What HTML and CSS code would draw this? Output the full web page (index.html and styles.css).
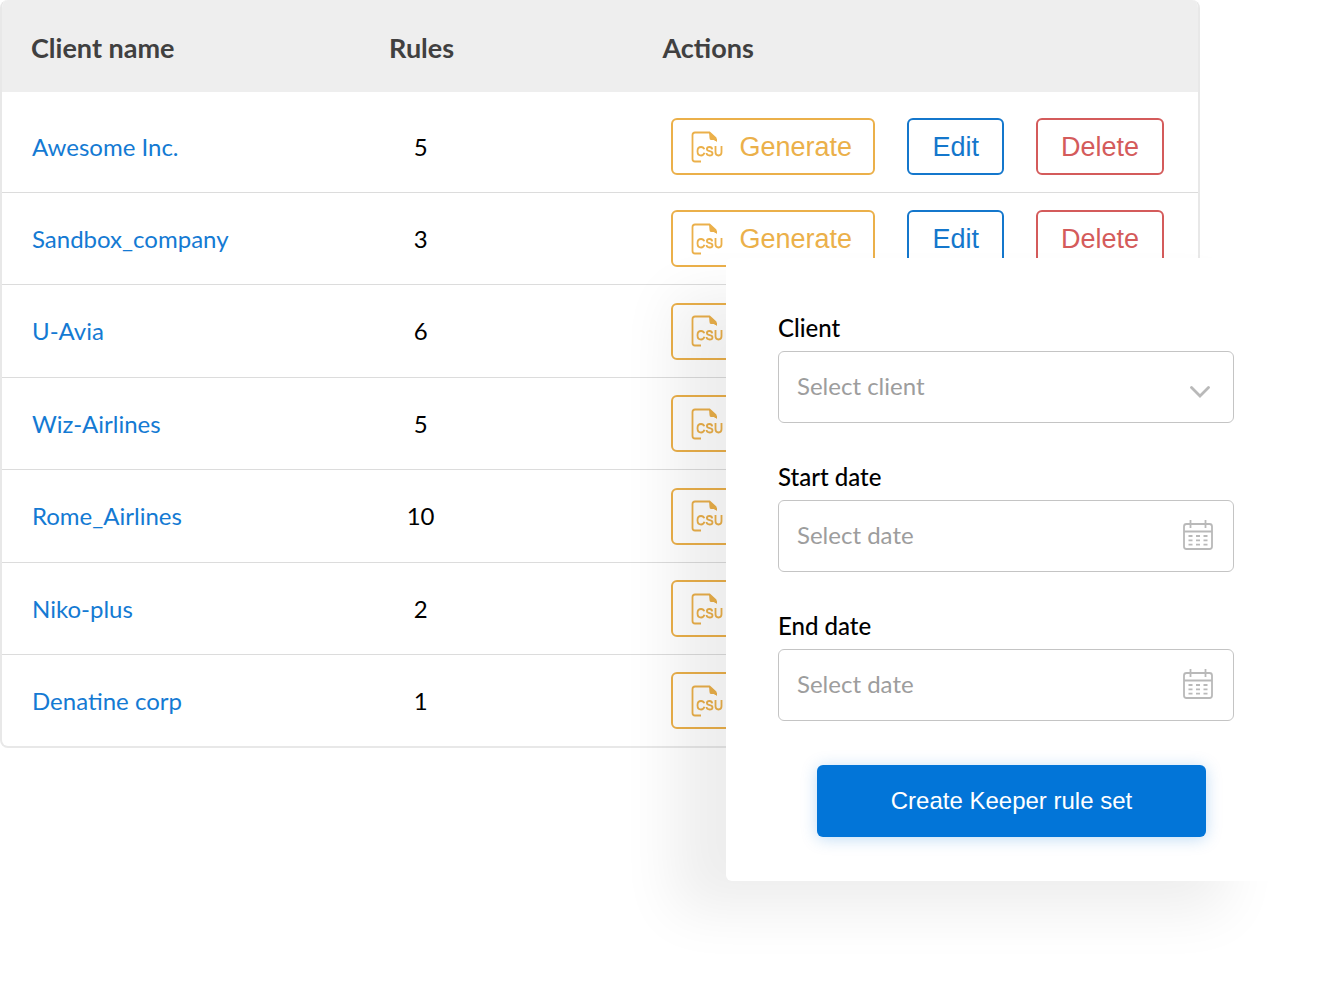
FILE: index.html
```html
<!DOCTYPE html>
<html lang="en">
<head>
<meta charset="utf-8">
<title>Clients</title>
<link rel="stylesheet" href="styles.css">
</head>
<body>
<svg class="sprite" aria-hidden="true">
  <symbol id="csv" viewBox="0 0 34 34">
    <path d="M12 31.500H6Q3.500 31.500 3.500 29V5Q3.500 2.500 6 2.500H20.500L26.500 8V11" fill="none" stroke="currentColor" stroke-width="1.800"/>
    <path d="M20 2L28 9V12L25.500 10H22Q20.500 10 20.500 8Z" fill="currentColor"/>
    <g fill="none" stroke="currentColor" stroke-width="1.800">
      <path d="M15.300 19.300Q14.500 17 12.100 17Q8.500 17 8.500 21.200Q8.500 25.500 12.100 25.500Q14.600 25.500 15.400 22.800"/>
      <path d="M23.200 19.300Q22.900 17 20.500 17Q17.900 17 17.900 19Q17.900 20.600 20.600 21.100Q23.500 21.600 23.500 23.400Q23.500 25.500 20.600 25.500Q17.800 25.500 17.500 23"/>
      <path d="M26.500 16V22.300Q26.500 25.500 29.500 25.500Q32.500 25.500 32.500 22.300V16"/>
    </g>
  </symbol>
  <symbol id="calendar" viewBox="0 0 32 32">
    <g fill="none" stroke="currentColor" stroke-width="1.800">
      <rect x="2" y="5" width="28" height="25" rx="2.500"/>
      <path d="M2 12.500H30M8.500 1V9M23.500 1V9"/>
      <path d="M6.500 17H10.500M14 17H18M21.500 17H25.500M6.500 21.300H10.500M14 21.300H18M21.500 21.300H25.500M6.500 25.600H10.500M14 25.600H18M21.500 25.600H25.500"/>
    </g>
  </symbol>
</svg>
<main class="page">
  <table class="clients">
    <thead>
      <tr><th class="col-name" scope="col">Client name</th><th class="col-rules" scope="col">Rules</th><th class="col-actions" scope="col">Actions</th></tr>
    </thead>
    <tbody>
      <tr><td><a href="#">Awesome Inc.</a></td><td class="count">5</td><td class="actions-cell"><div class="actions"><button class="btn generate" type="button"><svg class="csv"><use href="#csv"/></svg>Generate</button><button class="btn edit" type="button">Edit</button><button class="btn delete" type="button">Delete</button></div></td></tr>
      <tr><td><a href="#">Sandbox_company</a></td><td class="count">3</td><td class="actions-cell"><div class="actions"><button class="btn generate" type="button"><svg class="csv"><use href="#csv"/></svg>Generate</button><button class="btn edit" type="button">Edit</button><button class="btn delete" type="button">Delete</button></div></td></tr>
      <tr><td><a href="#">U-Avia</a></td><td class="count">6</td><td class="actions-cell"><div class="actions"><button class="btn generate" type="button" aria-label="Generate"><svg class="csv"><use href="#csv"/></svg></button></div></td></tr>
      <tr><td><a href="#">Wiz-Airlines</a></td><td class="count">5</td><td class="actions-cell"><div class="actions"><button class="btn generate" type="button" aria-label="Generate"><svg class="csv"><use href="#csv"/></svg></button></div></td></tr>
      <tr><td><a href="#">Rome_Airlines</a></td><td class="count">10</td><td class="actions-cell"><div class="actions"><button class="btn generate" type="button" aria-label="Generate"><svg class="csv"><use href="#csv"/></svg></button></div></td></tr>
      <tr><td><a href="#">Niko-plus</a></td><td class="count">2</td><td class="actions-cell"><div class="actions"><button class="btn generate" type="button" aria-label="Generate"><svg class="csv"><use href="#csv"/></svg></button></div></td></tr>
      <tr><td><a href="#">Denatine corp</a></td><td class="count">1</td><td class="actions-cell"><div class="actions"><button class="btn generate" type="button" aria-label="Generate"><svg class="csv"><use href="#csv"/></svg></button></div></td></tr>
    </tbody>
  </table>

  <form class="panel">
    <div class="field">
      <label for="client">Client</label>
      <div class="control">
        <select id="client"><option>Select client</option></select>
        <svg class="chevron" viewBox="0 0 20 12" aria-hidden="true"><path d="M1.500 1.500L10 10L18.500 1.500" fill="none" stroke="currentColor" stroke-width="2.800" stroke-linecap="round"/></svg>
      </div>
    </div>
    <div class="field">
      <label for="start">Start date</label>
      <div class="control">
        <input id="start" type="text" placeholder="Select date">
        <svg class="calendar" aria-hidden="true"><use href="#calendar"/></svg>
      </div>
    </div>
    <div class="field">
      <label for="end">End date</label>
      <div class="control">
        <input id="end" type="text" placeholder="Select date">
        <svg class="calendar" aria-hidden="true"><use href="#calendar"/></svg>
      </div>
    </div>
    <button class="submit" type="submit">Create Keeper rule set</button>
  </form>
</main>
</body>
</html>
```
FILE: styles.css
```css
* { box-sizing: border-box; }

body {
  margin: 0;
  background: #fff;
  color: #000;
  font: 24px/30px Lato, "Liberation Sans", sans-serif;
}

.sprite { display: none; }

.page {
  position: relative;
  min-height: 100vh;
  padding-right: 122px;
}

.clients {
  width: 100%;
  table-layout: fixed;
  border: 2px solid #e8e8e8;
  border-top: 0;
  border-radius: 8px;
  border-collapse: separate;
  border-spacing: 0;
  overflow: hidden;
}

.clients th {
  height: 92px;
  padding: 4px 0 0;
  background: #eee;
  color: #404040;
  font-size: 27px;
  font-weight: 700;
  text-align: left;
}

.clients .col-name { width: 30%; padding-left: 29px; }
.clients .col-rules { width: 10%; padding-left: 2px; text-align: center; }
.clients .col-actions { padding-left: 182px; }

.clients td {
  height: 92px;
  padding: 0;
  border-bottom: 1px solid #dcdcdc;
}

.clients td:first-child { padding-left: 30px; }
.clients tbody tr:nth-child(odd) td { height: 93px; }
.clients tbody tr:first-child td { height: 101px; padding-top: 9px; }
.clients tbody tr:last-child td { height: 91px; border-bottom: 0; }
.clients .count { text-align: center; }
.clients .actions-cell { padding-left: 191px; }

.clients a {
  color: #147ad3;
  text-decoration: none;
}

.actions {
  display: flex;
  gap: 32px;
}

.btn {
  display: flex;
  align-items: center;
  height: 57px;
  padding: 0 23px;
  border: 2px solid currentColor;
  border-radius: 6px;
  background: none;
  font: 27px/32px "Liberation Sans", Arial, sans-serif;
}

.generate {
  gap: 16px;
  min-width: 204px;
  padding: 0 18px 0 16px;
  color: #ebb04a;
}

.edit { color: #1477cc; }
.delete { color: #d45b5b; }

.csv {
  width: 34px;
  height: 34px;
}

.panel {
  position: absolute;
  top: 258px;
  right: 36px;
  width: 560px;
  padding: 55px 52px 44px;
  border-radius: 6px;
  background: #fff;
  box-shadow: -56px 34px 56px -4px rgba(0, 0, 0, 0.07);
}

.field { margin-bottom: 39px; }

.field label {
  display: block;
  margin-bottom: 8px;
  font-weight: 500;
}

.control {
  display: flex;
  align-items: center;
  height: 72px;
  padding: 0 19px 2px 18px;
  border: 1px solid #c4c4c4;
  border-radius: 6px;
  color: #b9b9b9;
}

.control input,
.control select {
  flex: 1;
  min-width: 0;
  height: 100%;
  padding: 0;
  border: 0;
  outline: 0;
  appearance: none;
  background: none;
  color: #9d9d9d;
  font: inherit;
}

.control input { padding-bottom: 2px; }
.control input::placeholder { color: #9d9d9d; opacity: 1; }

.chevron {
  width: 20px;
  height: 12px;
  margin: 12px 4px 0 0;
}

.calendar {
  width: 32px;
  height: 32px;
}

.submit {
  display: block;
  width: 389px;
  height: 72px;
  margin: 44px 28px 0 auto;
  border: 0;
  border-radius: 6px;
  background: #0275d8;
  box-shadow: 0 2px 16px rgba(2, 117, 216, 0.25);
  color: #fff;
  font: 24px/30px "Liberation Sans", Arial, sans-serif;
}
```
